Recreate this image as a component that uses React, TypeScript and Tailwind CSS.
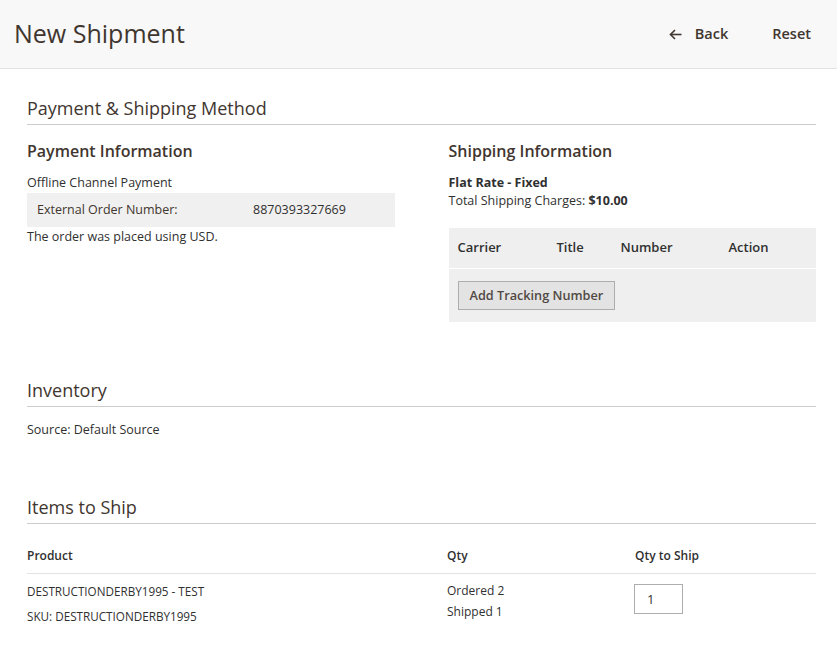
import React from 'react'

function SectionTitle({ children }: { children: React.ReactNode }) {
  return (
    <div className="border-b border-[#cccccc] pb-[4px]">
      <h2 className="text-[18px] leading-[24px] text-[#41362f]">{children}</h2>
    </div>
  )
}

function ArrowLeft() {
  return (
    <svg width="13" height="11" viewBox="0 0 13 11" fill="none" stroke="#41362f" strokeWidth="1.6">
      <path d="M12.5 5.5H1.5" />
      <path d="M6 1L1.5 5.5L6 10" />
    </svg>
  )
}

export default function App() {
  return (
    <div className="min-h-[648px] bg-white text-[#303030]" style={{ fontFamily: '"Open Sans", sans-serif' }}>
      <header className="h-[69px] bg-[#f8f8f8] border-b border-[#e3e3e3] flex items-center justify-between pl-[14px] pr-[26px]">
        <h1 className="text-[25px] leading-[34px] text-[#41362f] mb-[2px]">New Shipment</h1>
        <div className="flex items-center gap-[44px] text-[14.5px] font-semibold text-[#41362f]">
          <button className="flex items-center gap-[13px]">
            <ArrowLeft />
            <span>Back</span>
          </button>
          <button>Reset</button>
        </div>
      </header>

      <main className="pl-[27px] pr-[21px]">
        <section className="pt-[27px]">
          <SectionTitle>Payment &amp; Shipping Method</SectionTitle>
          <div className="grid grid-cols-2 gap-[54px] pt-[15px]">
            <div>
              <h3 className="text-[16px] leading-[22px] font-semibold text-[#41362f]">Payment Information</h3>
              <p className="text-[12.5px] leading-[18px] mt-[12px]">Offline Channel Payment</p>
              <div className="bg-[#f0f0f0] h-[34px] mt-[1px] flex items-center pl-[10px] text-[12.5px] text-[#303030]">
                <span className="w-[216px] text-[#41362f]">External Order Number:</span>
                <span>8870393327669</span>
              </div>
              <p className="text-[12.5px] leading-[18px] mt-[1px]">The order was placed using USD.</p>
            </div>
            <div>
              <h3 className="text-[16px] leading-[22px] font-semibold text-[#41362f]">Shipping Information</h3>
              <p className="text-[12.5px] leading-[18px] font-bold mt-[12px] text-[#303030]">Flat Rate - Fixed</p>
              <p className="text-[12.5px] leading-[18px]">
                Total Shipping Charges: <span className="font-bold">$10.00</span>
              </p>
              <div className="bg-[#efefef] mt-[18px]">
                <div className="h-[41px] grid grid-cols-[99px_64px_108px_1fr] items-center pl-[9px] text-[13px] font-semibold text-[#303030] border-b border-white">
                  <span>Carrier</span>
                  <span>Title</span>
                  <span>Number</span>
                  <span>Action</span>
                </div>
                <div className="pl-[9px] pt-[12px] pb-[12px]">
                  <button className="h-[29px] px-[11px] bg-[#e3e3e3] border border-[#adadad] text-[12.7px] font-semibold text-[#514943]">
                    Add Tracking Number
                  </button>
                </div>
              </div>
            </div>
          </div>
        </section>

        <section className="pt-[56px]">
          <SectionTitle>Inventory</SectionTitle>
          <p className="text-[12.5px] leading-[18px] mt-[14px]">Source: Default Source</p>
        </section>

        <section className="pt-[56px]">
          <SectionTitle>Items to Ship</SectionTitle>
          <div className="mt-[23px]">
            <div className="grid grid-cols-[420px_188px_1fr] border-b border-[#e3e3e3] pb-[8px] text-[12px] leading-[18px] font-semibold text-[#303030]">
              <span>Product</span>
              <span>Qty</span>
              <span>Qty to Ship</span>
            </div>
            <div className="grid grid-cols-[420px_187px_1fr] pt-[8px] text-[11.7px] text-[#303030]">
              <div>
                <p className="leading-[18px]">DESTRUCTIONDERBY1995 - TEST</p>
                <p className="leading-[18px] mt-[7px]">SKU: DESTRUCTIONDERBY1995</p>
              </div>
              <div className="text-[12px]">
                <p className="leading-[18px]">Ordered 2</p>
                <p className="leading-[18px] mt-[3px]">Shipped 1</p>
              </div>
              <div className="pt-[2px]">
                <input
                  defaultValue="1"
                  className="w-[49px] h-[30px] border border-[#adadad] bg-white px-[12px] text-[13px] text-[#303030] outline-none"
                />
              </div>
            </div>
          </div>
        </section>
      </main>
    </div>
  )
}
